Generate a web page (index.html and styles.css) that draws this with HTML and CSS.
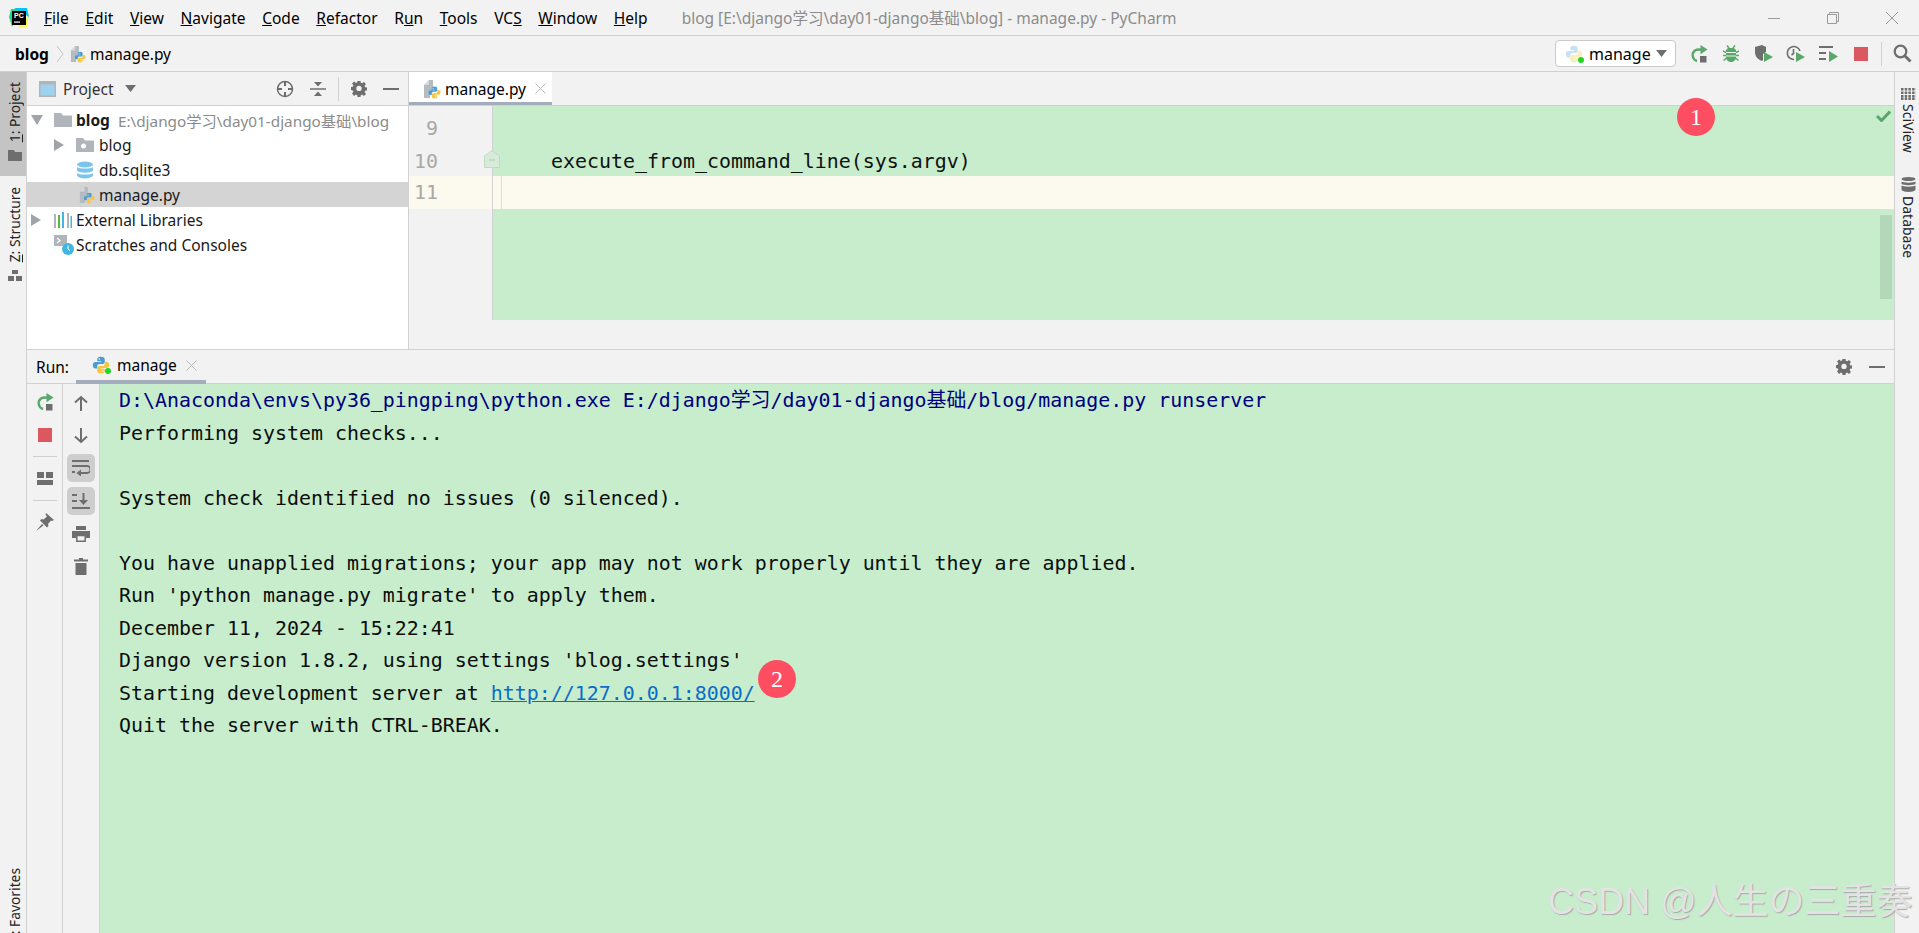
FILE: index.html
```html
<!DOCTYPE html>
<html lang="en">
<head>
<meta charset="utf-8">
<title>blog - manage.py - PyCharm</title>
<link rel="stylesheet" href="styles.css">
</head>
<body>
<svg class="defs" width="0" height="0">
  <symbol id="py" viewBox="0 0 24 24">
    <path fill="#4b9cd3" d="M12 1C7.5 1 7 3 7 4.5V7h5.300v1H4.500C2.500 8 1 9.500 1 12.200S2.500 16.500 4.500 16.500H7v-3c0-1.700 1.300-2.800 3-2.800h4.300c1.500 0 2.700-1.200 2.700-2.700V4.500C17 2.500 15.500 1 12 1z"/>
    <path fill="#f8c63d" d="M12 23c4.500 0 5-2 5-3.500V17h-5.300v-1h7.800c2 0 3.500-1.500 3.500-4.200s-1.500-4.300-3.500-4.300H17v3c0 1.700-1.300 2.800-3 2.800H9.700C8.200 13.300 7 14.500 7 16v3.500C7 21.500 8.500 23 12 23z"/>
    <circle cx="9.500" cy="4" r="1" fill="#fff"/><circle cx="14.500" cy="20" r="1" fill="#fff"/>
  </symbol>
  <symbol id="pypale" viewBox="0 0 24 24">
    <path fill="#c6e2f5" d="M12 1C7.500 1 7 3 7 4.500V7h5.300v1H4.500C2.500 8 1 9.500 1 12.200S2.500 16.500 4.500 16.500H7v-3c0-1.700 1.300-2.800 3-2.800h4.300c1.500 0 2.700-1.200 2.700-2.700V4.500C17 2.500 15.500 1 12 1z"/>
    <path fill="#fbeeb8" d="M12 23c4.500 0 5-2 5-3.500V17h-5.300v-1h7.800c2 0 3.500-1.500 3.500-4.200s-1.500-4.300-3.500-4.300H17v3c0 1.700-1.300 2.800-3 2.800H9.700C8.200 13.300 7 14.500 7 16v3.500C7 21.500 8.500 23 12 23z"/>
  </symbol>
  <symbol id="pyfile" viewBox="0 0 18 20">
    <path fill="#b4bbc1" d="M1 6l5-5h4v12H7v6H1z"/>
    <path fill="#d7dbdf" d="M6 1v5H1z"/>
    <use href="#py" x="5" y="7" width="13" height="13"/>
  </symbol>
  <symbol id="rerun" viewBox="0 0 18 18">
    <path fill="none" stroke="#59a869" stroke-width="2.400" d="M7 16A6 6 0 0 1 5 5.500C6.500 4.600 9 4.500 11 4.600"/>
    <path fill="#59a869" d="M10.500 0l7 4.600-7 4.600z"/>
    <rect x="10" y="11" width="6.500" height="6.500" fill="#6e6e6e"/>
  </symbol>
  <symbol id="stop" viewBox="0 0 14 14"><rect width="14" height="14" fill="#db5860"/></symbol>
  <symbol id="gear" viewBox="0 0 16 16">
    <path fill="#6e6e6e" fill-rule="evenodd" d="M6.500 0h3l.4 2.300 1.300.6L13.200 1.500l2.100 2.100-1.400 2 .6 1.400 2.300.4v3l-2.300.4-.6 1.300 1.400 2-2.100 2.100-2-1.400-1.300.6-.4 2.300h-3l-.4-2.300-1.300-.6-2 1.400L.7 13.700l1.400-2-.6-1.300L-.800 10V7l2.300-.4.600-1.400-1.400-2 2.100-2.100 2 1.400 1.300-.6zM8 5.500a2.800 2.800 0 1 0 0 5.600 2.800 2.800 0 0 0 0-5.600z" transform="translate(.4 -.5) scale(.95)"/>
  </symbol>
</svg>

<header class="titlebar">
  <svg class="logo" width="20" height="20" viewBox="0 0 20 20">
    <path fill="#21d789" d="M2 1h10L3 19 0 9z"/><path fill="#fcf84a" d="M20 6l-2 13-9 1z"/><path fill="#07c3f2" d="M5 0h13l2 9z"/>
    <rect x="3" y="3" width="14" height="14" fill="#000"/>
    <text x="5" y="10" class="logo-text">PC</text>
    <rect x="5" y="13.500" width="6" height="1.200" fill="#fff"/>
  </svg>
  <nav class="menu">
    <span><u>F</u>ile</span><span><u>E</u>dit</span><span><u>V</u>iew</span><span><u>N</u>avigate</span><span><u>C</u>ode</span><span><u>R</u>efactor</span><span>R<u>u</u>n</span><span><u>T</u>ools</span><span>VC<u>S</u></span><span><u>W</u>indow</span><span><u>H</u>elp</span>
  </nav>
  <div class="wintitle">blog [E:\django学习\day01-django基础\blog] - manage.py - PyCharm</div>
  <div class="winctl">
    <svg width="14" height="14" viewBox="0 0 14 14"><path stroke="#9a9a9a" stroke-width="1" d="M1 7.500h12"/></svg>
    <svg width="14" height="14" viewBox="0 0 14 14"><path fill="none" stroke="#9a9a9a" d="M1.500 3.500h9v9h-9zM3.500 3.500v-2h9v9h-2"/></svg>
    <svg width="14" height="14" viewBox="0 0 14 14"><path stroke="#9a9a9a" d="M1 1l12 12M13 1L1 13"/></svg>
  </div>
</header>

<div class="navbar">
  <b class="crumb">blog</b>
  <svg class="chev" width="8" height="18" viewBox="0 0 8 18"><path fill="none" stroke="#c4c4c4" d="M1 1l6 8-6 8"/></svg>
  <svg class="ic-file" width="16" height="18"><use href="#pyfile"/></svg>
  <span class="crumb-file">manage.py</span>
  <div class="runconfig">
    <span class="pyrun"><svg width="18" height="18"><use href="#pypale"/></svg><i class="dot"></i></span>
    <span>manage</span>
    <svg width="11" height="7" viewBox="0 0 11 7"><path fill="#6e6e6e" d="M0 0h11L5.500 7z"/></svg>
  </div>
  <div class="tools">
    <span class="tool"><svg width="18" height="18"><use href="#rerun"/></svg></span>
    <span class="tool"><svg width="16" height="17" viewBox="0 0 16 17"><g fill="none" stroke="#59a869" stroke-width="1.500"><path d="M4 .5l2 2.500M12 .5L10 3M0 6l3 1.500M16 6l-3 1.500M0 10.500h3M16 10.500h-3M.5 15.500L3.500 13M15.500 15.500L12.500 13"/></g><path fill="#59a869" d="M5 3h6l2 2v7.500C13 15 10.500 17 8 17s-5-2-5-4.500V5z"/><path stroke="#f2f2f2" d="M3 7.500h10M3 11h10"/></svg></span>
    <span class="tool"><svg width="20" height="18" viewBox="0 0 20 18"><path fill="#6e6e6e" d="M1 2l7-2 4 2v5l-3 2v6l-1 1C3 14 1 11 1 7z"/><path fill="#59a869" d="M10 7l9 5-9 5z"/></svg></span>
    <span class="tool"><svg width="20" height="18" viewBox="0 0 20 18"><path fill="none" stroke="#6e6e6e" stroke-width="1.600" d="M8 14.500A6.500 6.500 0 1 1 14 6M7.500 4v4.500L5.500 10"/><path fill="#59a869" d="M10 7l9 5-9 5z"/></svg></span>
    <span class="tool"><svg width="19" height="18" viewBox="0 0 19 18"><path stroke="#6e6e6e" stroke-width="2" d="M0 2h14M0 8h7M0 14h7"/><path fill="#59a869" d="M10 6l9 5.500-9 5.500z"/></svg></span>
    <span class="tool"><svg width="14" height="14"><use href="#stop"/></svg></span>
    <i class="tsep"></i>
    <span class="tool"><svg width="19" height="19" viewBox="0 0 19 19"><circle cx="7.500" cy="7.500" r="5.800" fill="none" stroke="#6e6e6e" stroke-width="2.200"/><path stroke="#6e6e6e" stroke-width="3" d="M11.500 11.500l6 6"/></svg></span>
  </div>
</div>

<div class="workspace">
  <aside class="stripe-left">
    <div class="stripe-btn active">
      <span class="vtext"><u>1</u>: Project</span>
      <svg width="14" height="11" viewBox="0 0 14 11"><path fill="#6e6e6e" d="M0 0h6l1 2h7v9H0z"/></svg>
    </div>
    <div class="stripe-btn">
      <span class="vtext"><u>Z</u>: Structure</span>
      <svg width="14" height="11" viewBox="0 0 14 11"><path fill="#6e6e6e" d="M4 0h6v4H4zM0 6h6v5H0zM8 6h6v5H8z"/></svg>
    </div>
    <span class="vtext favs">2: Favorites</span>
  </aside>

  <div class="center">
    <div class="upper">
      <section class="project">
        <div class="phead">
          <svg class="pwin" width="17" height="16" viewBox="0 0 17 16"><rect width="17" height="16" fill="#afb5ba"/><rect x="1.500" y="3.500" width="14" height="11" fill="#9ed3f0"/></svg>
          <span class="ptitle">Project</span>
          <svg class="ptri" width="11" height="7" viewBox="0 0 11 7"><path fill="#6e6e6e" d="M0 0h11L5.500 7z"/></svg>
          <div class="pactions">
            <svg width="18" height="18" viewBox="0 0 18 18"><circle cx="9" cy="9" r="7.500" fill="none" stroke="#6e6e6e" stroke-width="1.500"/><path stroke="#6e6e6e" stroke-width="2" d="M9 1v5M9 12v5M1 9h5M12 9h5"/></svg>
            <svg width="16" height="16" viewBox="0 0 16 16"><path stroke="#6e6e6e" stroke-width="1.500" d="M0 8h16"/><path fill="#6e6e6e" d="M4 1h8L8 5.500zM4 15h8L8 10.500z"/></svg>
            <i class="psep"></i>
            <svg width="16" height="16"><use href="#gear"/></svg>
            <svg width="16" height="16" viewBox="0 0 16 16"><path stroke="#6e6e6e" stroke-width="2" d="M0 8h16"/></svg>
          </div>
        </div>
        <ul class="tree">
          <li class="row lv0">
            <svg class="arrow" width="12" height="10" viewBox="0 0 12 10"><path fill="#a0a4a8" d="M0 0h12L6 10z"/></svg>
            <svg class="ficon" width="18" height="14" viewBox="0 0 18 14"><path fill="#afb5ba" d="M0 0h7l2 2.500h9V14H0z"/></svg>
            <b>blog</b><span class="muted">E:\django学习\day01-django基础\blog</span>
          </li>
          <li class="row lv1">
            <svg class="arrow" width="10" height="12" viewBox="0 0 10 12"><path fill="#a0a4a8" d="M0 0l10 6-10 6z"/></svg>
            <svg class="ficon" width="18" height="14" viewBox="0 0 18 14"><path fill="#afb5ba" d="M0 0h7l2 2.500h9V14H0z"/><circle cx="7.500" cy="8" r="2.500" fill="#fff"/></svg>
            <span>blog</span>
          </li>
          <li class="row lv2">
            <svg class="ficon" width="18" height="18" viewBox="0 0 18 18"><g fill="#7cc4ea"><ellipse cx="9" cy="3.500" rx="8" ry="3"/><path d="M1 6c2 2 14 2 16 0v3.500c-2 3-14 3-16 0zM1 12c2 2 14 2 16 0v2.500c-2 4-14 4-16 0z"/></g></svg>
            <span>db.sqlite3</span>
          </li>
          <li class="row lv2 selected">
            <svg class="ficon pf" width="16" height="18"><use href="#pyfile"/></svg>
            <span>manage.py</span>
          </li>
          <li class="row lv0">
            <svg class="arrow ext" width="10" height="12" viewBox="0 0 10 12"><path fill="#a0a4a8" d="M0 0l10 6-10 6z"/></svg>
            <svg class="ficon" width="18" height="16" viewBox="0 0 18 16"><path stroke="#afb5ba" stroke-width="2" d="M1 2v14M14 1v15"/><path stroke="#62b543" stroke-width="2" d="M5 3v13"/><path stroke="#40b6e0" stroke-width="2" d="M9 0v16M17.500 4v12"/></svg>
            <span>External Libraries</span>
          </li>
          <li class="row lv0">
            <i class="arrow-gap"></i>
            <svg class="ficon scr" width="20" height="20" viewBox="0 0 20 20"><path fill="#afb5ba" d="M0 0h13v11H0z"/><path fill="none" stroke="#fff" stroke-width="1.200" d="M3 3l3 2.500L3 8"/><circle cx="14" cy="14" r="6" fill="#40b6e0"/><path fill="none" stroke="#fff" d="M14 10.500V14l2 1.500"/></svg>
            <span>Scratches and Consoles</span>
          </li>
        </ul>
      </section>

      <section class="editor">
        <div class="tabs">
          <div class="tab">
            <svg width="18" height="20"><use href="#pyfile"/></svg>
            <span>manage.py</span>
            <svg class="x" width="11" height="11" viewBox="0 0 11 11"><path stroke="#b8b8b8" d="M.5.500l10 10M10.500.500l-10 10"/></svg>
          </div>
        </div>
        <div class="code">
          <div class="ln">
            <div class="num">9</div>
            <div class="num fold">10<svg class="foldmark" width="16" height="18" viewBox="0 0 16 18"><path fill="#d6ecd8" stroke="#c3d9c6" d="M.5 17.500V6L8 .5 15.500 6v11.500z"/><path stroke="#b3c7b6" d="M5 10h6"/></svg></div>
            <div class="num cur">11</div>
          </div>
          <div class="src">
            <div class="line"></div>
            <div class="line">    execute_from_command_line(sys.argv)</div>
            <div class="line cur"><i class="indent"></i></div>
            <svg class="okmark" width="15" height="12" viewBox="0 0 15 12"><path fill="none" stroke="#59a869" stroke-width="3" d="M1 6l4.500 4.500L14 1.500"/></svg>
            <i class="scroll"></i>
          </div>
        </div>
        <div class="hscroll"></div>
      </section>
    </div>

    <section class="run">
      <div class="runhead">
        <span class="runlabel">Run:</span>
        <div class="runtab">
          <span class="pyrun"><svg width="18" height="18"><use href="#py"/></svg><i class="dot"></i></span>
          <span>manage</span>
          <svg class="x" width="11" height="11" viewBox="0 0 11 11"><path stroke="#b8b8b8" d="M.5.500l10 10M10.500.500l-10 10"/></svg>
        </div>
        <div class="runactions">
          <svg width="16" height="16"><use href="#gear"/></svg>
          <svg width="16" height="16" viewBox="0 0 16 16"><path stroke="#6e6e6e" stroke-width="2" d="M0 8h16"/></svg>
        </div>
      </div>
      <div class="runbody">
        <div class="rtool one">
          <span class="rbtn"><svg width="18" height="18"><use href="#rerun"/></svg></span>
          <span class="rbtn"><svg width="14" height="14"><use href="#stop"/></svg></span>
          <i class="rsep"></i>
          <span class="rbtn"><svg width="16" height="13" viewBox="0 0 16 13"><path fill="#6e6e6e" d="M0 0h7v6H0zM9 0h7v6H9zM0 8h16v5H0z"/></svg></span>
          <i class="rsep"></i>
          <span class="rbtn"><svg width="18" height="18" viewBox="0 0 18 18"><path fill="#6e6e6e" d="M10 0l8 7-2 1-1-.5L12 11l.5 2-1.500 1.500L4 7.500 5.500 6 7.500 6.500 11 3.500 9.500 1.500zM6 11l1.500 1.500L0 18z"/></svg></span>
        </div>
        <div class="rtool two">
          <span class="rbtn"><svg width="14" height="16" viewBox="0 0 14 16"><path fill="none" stroke="#6e6e6e" stroke-width="2" d="M7 16V2M1 7.500L7 2l6 5.500"/></svg></span>
          <span class="rbtn"><svg width="14" height="16" viewBox="0 0 14 16"><path fill="none" stroke="#6e6e6e" stroke-width="2" d="M7 0v14M1 8.500L7 14l6-5.500"/></svg></span>
          <span class="rbtn on"><svg width="18" height="16" viewBox="0 0 18 16"><path fill="none" stroke="#6e6e6e" stroke-width="2" d="M0 1h17M0 6h15a2.500 2.500 0 0 1 0 7H7M0 12h3"/><path fill="#6e6e6e" d="M9 9.500v7L4.500 13z"/></svg></span>
          <span class="rbtn on"><svg width="18" height="16" viewBox="0 0 18 16"><path stroke="#6e6e6e" stroke-width="2" d="M0 2h5M0 8h5M0 15h18M11.500 0v9"/><path fill="#6e6e6e" d="M7 7h9l-4.500 5z"/></svg></span>
          <span class="rbtn"><svg width="18" height="16" viewBox="0 0 18 16"><path fill="#6e6e6e" d="M4 0h10v4H4zM0 5h18v7h-4V9H4v3H0z"/><path fill="none" stroke="#6e6e6e" stroke-width="1.500" d="M4.800 9.500h8.400v5.700H4.800z"/></svg></span>
          <span class="rbtn"><svg width="14" height="17" viewBox="0 0 14 17"><path fill="#6e6e6e" d="M5 0h4v1.500h5V3.500H0V1.500h5zM1.500 5h11v12h-11z"/></svg></span>
        </div>
        <div class="console">
          <div class="cmd">D:\Anaconda\envs\py36_pingping\python.exe E:/django<span class="cjk">学习</span>/day01-django<span class="cjk">基础</span>/blog/manage.py runserver</div>
          <div>Performing system checks...</div>
          <div>&nbsp;</div>
          <div>System check identified no issues (0 silenced).</div>
          <div>&nbsp;</div>
          <div>You have unapplied migrations; your app may not work properly until they are applied.</div>
          <div>Run 'python manage.py migrate' to apply them.</div>
          <div>December 11, 2024 - 15:22:41</div>
          <div>Django version 1.8.2, using settings 'blog.settings'</div>
          <div>Starting development server at <a class="link">http://127.0.0.1:8000/</a></div>
          <div>Quit the server with CTRL-BREAK.</div>
        </div>
      </div>
    </section>
  </div>

  <aside class="stripe-right">
    <div class="rs-item">
      <svg width="15" height="12" viewBox="0 0 15 12"><path stroke="#6e6e6e" stroke-width="2.500" stroke-dasharray="2.500 1.200" d="M0 1.250h15M0 4.750h15M0 8.250h15M0 11h15"/></svg>
      <span class="vtext-r">SciView</span>
    </div>
    <div class="rs-item">
      <svg width="15" height="15" viewBox="0 0 15 15"><g fill="#6e6e6e"><ellipse cx="7.500" cy="2" rx="7" ry="2"/><path d="M.5 4.500c2 1.500 12 1.500 14 0V7c-2 1.500-12 1.500-14 0zM.5 8.500c2 1.500 12 1.500 14 0V13c-2 2.500-12 2.500-14 0z"/></g></svg>
      <span class="vtext-r">Database</span>
    </div>
  </aside>
</div>

<div class="badge b1">1</div>
<div class="badge b2">2</div>
<div class="watermark">CSDN @人生の三重奏</div>
</body>
</html>
```

FILE: styles.css
```css
* { box-sizing: border-box; }
html, body { margin: 0; height: 100%; }
body {
  width: 1919px; height: 933px; overflow: hidden; position: relative;
  display: flex; flex-direction: column;
  background: #f2f2f2; color: #000;
  font: 15.5px "Noto Sans", "Noto Sans CJK SC", sans-serif;
}
.defs { position: absolute; }
svg { display: block; flex: none; }
ul { margin: 0; padding: 0; list-style: none; }
i { display: block; }

.titlebar { height: 36px; flex: none; display: flex; align-items: center; border-bottom: 1px solid #d1d1d1; padding-left: 9px; }
.logo-text { font: bold 7px "Liberation Sans", sans-serif; fill: #fff; }
.menu { display: flex; gap: 16.700px; margin-left: 15px; }
.wintitle { margin-left: 34px; color: #8c8c8c; font-size: 15.500px; }
.winctl { margin-left: auto; display: flex; gap: 45px; padding-right: 20px; }

.navbar { height: 36px; flex: none; display: flex; align-items: center; border-bottom: 1px solid #d1d1d1; padding-left: 15px; }
.crumb { width: 35px; }
.chev { margin-left: 6px; }
.ic-file { margin-left: 6px; }
.crumb-file { margin-left: 4px; }
.runconfig { margin-left: auto; width: 121px; height: 27px; background: #fff; border: 1px solid #c9c9c9; border-radius: 4px; display: flex; align-items: center; padding-left: 9px; }
.runconfig span + span { margin-left: 6px; width: 67px; font-size: 16px; }
.pyrun { position: relative; display: block; flex: none; }
.dot { position: absolute; right: -1px; bottom: 0; width: 6px; height: 6px; border-radius: 50%; background: #22d622; }
.tools { display: flex; align-items: center; margin-left: 7px; width: 236px; }
.tool { width: 32.500px; display: flex; justify-content: center; }
.tsep { width: 1px; height: 24px; background: #d1d1d1; margin: 0 5px 0 4px; }

.workspace { flex: 1; min-height: 0; display: flex; }
.stripe-left { width: 27px; flex: none; border-right: 1px solid #d1d1d1; display: flex; flex-direction: column; overflow: hidden; }
.stripe-btn { display: flex; flex-direction: column; align-items: center; gap: 8px; padding: 10px 0 0 3px; height: 76px; }
.stripe-btn.active { background: #c4c4c4; height: 104px; }
.stripe-btn + .stripe-btn { height: auto; padding-top: 11px; }
.vtext { writing-mode: vertical-rl; transform: rotate(180deg); font-size: 13.800px; line-height: 18px; white-space: nowrap; color: #222; }
.favs { margin-top: auto; margin-bottom: -9px; align-self: center; margin-left: 3px; }

.center { flex: 1; min-width: 0; display: flex; flex-direction: column; }
.upper { height: 278px; flex: none; display: flex; border-bottom: 1px solid #d1d1d1; }

.project { width: 382px; flex: none; background: #fff; border-right: 1px solid #d1d1d1; }
.phead { height: 34px; background: #f2f2f2; border-bottom: 1px solid #d1d1d1; display: flex; align-items: center; padding-left: 12px; color: #333; }
.ptitle { margin-left: 7px; width: 52px; }
.ptri { margin-left: 10px; }
.pactions { margin-left: auto; display: flex; align-items: center; gap: 16px; padding-right: 9px; }
.psep { width: 1px; height: 24px; background: #d1d1d1; margin: 0 -4px; }
.tree { padding-top: 1px; }
.row { height: 25px; display: flex; align-items: center; color: #1a1a1a; }
.row.lv0 { padding-left: 4px; }
.row.lv0 .arrow { margin-right: 11px; }
.row.lv0 .arrow.ext { margin-right: 13px; }
.row.lv0 .arrow-gap { width: 23px; }
.row.lv0 .ficon { margin-right: 4px; }
.row.lv0 .ficon.scr { margin-right: 2px; }
.row.lv1 { padding-left: 27px; }
.row.lv1 .arrow { margin-right: 12px; }
.row.lv1 .ficon { margin-right: 5px; }
.row.lv2 { padding-left: 49px; }
.row.lv2 .ficon { margin-right: 5px; }
.row.lv2 .ficon.pf { margin: 0 4px 0 3px; }
.selected { background: #d4d4d4; }
.muted { margin-left: 8px; color: #8c8c8c; font-size: 15.300px; }

.editor { flex: 1; min-width: 0; display: flex; flex-direction: column; }
.tabs { height: 34px; flex: none; border-bottom: 1px solid #d1d1d1; }
.tab { width: 143px; height: 33px; background: #fff; border-bottom: 3px solid #a3adbc; display: flex; align-items: center; padding: 3px 0 0 14px; gap: 4px; }
.tab .x { margin-left: 5px; }
.code { height: 214px; flex: none; display: flex; font: 19.930px/37px "DejaVu Sans Mono", monospace; }
.ln { width: 84px; flex: none; padding-top: 4px; border-right: 1px solid #d1d1d1; color: #a8a8a8; text-align: right; position: relative; z-index: 1; }
.num { height: 33px; padding-right: 54px; position: relative; }
.foldmark { position: absolute; right: -8px; top: 7px; }
.num.cur { background: #fcf9ee; line-height: 33px; }
.src { flex: 1; min-width: 0; padding-top: 4px; background: #c7edcc; position: relative; color: #111; }
.line { height: 33px; padding-left: 10px; white-space: pre; }
.line.cur { background: #fcfaee; padding-left: 8px; }
.indent { width: 1px; height: 33px; background: #c7edcc; }
.okmark { position: absolute; right: 3px; top: 4px; }
.scroll { position: absolute; right: 2px; top: 109px; bottom: 21px; width: 12px; background: #b4d6b9; }
.hscroll { flex: 1; }

.run { flex: 1; min-height: 0; display: flex; flex-direction: column; }
.runhead { height: 34px; flex: none; border-bottom: 1px solid #d1d1d1; display: flex; align-items: center; padding-left: 9px; }
.runlabel { width: 40px; }
.runtab { height: 33px; width: 130px; margin-top: 1px; border-bottom: 4px solid #a3adbc; display: flex; align-items: center; padding-left: 16px; gap: 7px; }
.runtab .x { margin-left: 2px; }
.runactions { margin-left: auto; display: flex; gap: 17px; padding-right: 9px; }
.runbody { flex: 1; min-height: 0; display: flex; }
.rtool { flex: none; display: flex; flex-direction: column; align-items: center; }
.rtool.one { width: 36px; border-right: 1px solid #d1d1d1; padding-top: 2px; }
.rtool.two { width: 37px; border-right: 1px solid #d1d1d1; padding-top: 3px; }
.rbtn { width: 28px; height: 32.500px; display: flex; align-items: center; justify-content: center; border-radius: 5px; }
.rsep { width: 24px; height: 1px; background: #d1d1d1; margin: 5px 0; }
.rbtn.on { background: #cecece; height: 28px; margin: 2px 0 3px; }
.console { flex: 1; min-width: 0; background: #c7edcc; padding: 1px 0 0 19px; font: 19.930px/32.500px "DejaVu Sans Mono", monospace; color: #0d0d0d; }
.console div { white-space: pre; height: 32.500px; }
.cmd { color: #000080; }
.cjk { font-family: "Noto Sans CJK SC", sans-serif; line-height: 1; }
.link { color: #0a6ccb; text-decoration: underline; }

.stripe-right { width: 25px; flex: none; border-left: 1px solid #d1d1d1; padding: 16px 0 0 5px; display: flex; flex-direction: column; gap: 24px; }
.rs-item { display: flex; flex-direction: column; align-items: center; gap: 4px; width: 16px; }
.vtext-r { writing-mode: vertical-rl; font-size: 14px; line-height: 16px; color: #222; white-space: nowrap; }

.badge { position: absolute; width: 38px; height: 38px; border-radius: 50%; background: #ff4d61; color: #fff; font: 24px/38px "Liberation Serif", serif; text-align: center; }
.b1 { left: 1677px; top: 98px; }
.b2 { left: 758px; top: 660px; }
.watermark { position: absolute; left: 1548px; top: 872px; font: 36px "Liberation Sans", "Noto Sans CJK JP", sans-serif; color: #e3e3e3; text-shadow: 1px 1px 1px #a9a9a9; white-space: nowrap; }
```
